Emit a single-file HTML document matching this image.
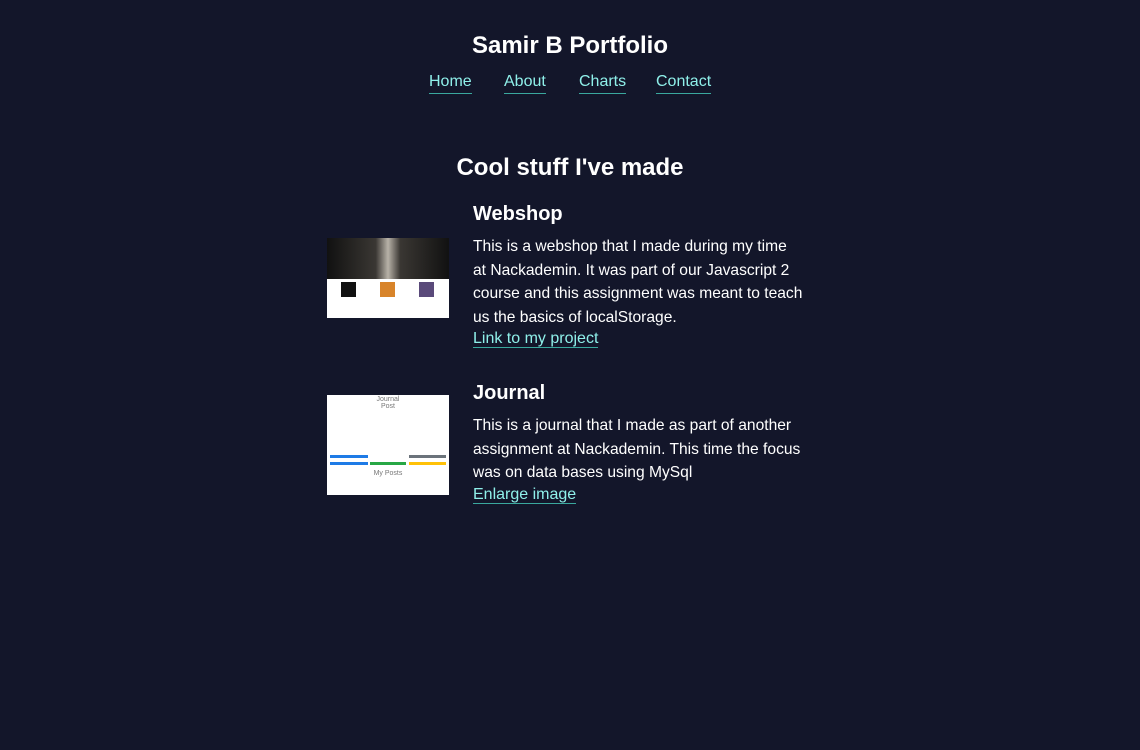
<!DOCTYPE html>
<html><head><meta charset="utf-8"><style>
body{margin:0;background:#13162a;color:#fff;font-family:"Liberation Sans",sans-serif;width:1140px;height:750px;overflow:hidden;position:relative}
.a{position:absolute}
h1,h2,h3{margin:0;font-weight:bold;white-space:nowrap}
a{color:#8ff0ea;text-decoration:none;border-bottom:1px solid #3aa89e}
.nav a{position:absolute;top:72px;font-size:16px;line-height:20px;padding-bottom:1px}
p{margin:0;font-size:15.6px;line-height:23.5px;white-space:nowrap}
</style></head><body>
<h1 class="a" style="left:0;width:1140px;text-align:center;top:32px;font-size:24px">Samir B Portfolio</h1>
<div class="nav">
<a style="left:429px">Home</a><a style="left:504px">About</a><a style="left:579px">Charts</a><a style="left:656px">Contact</a>
</div>
<h2 class="a" style="left:0;width:1140px;text-align:center;top:154px;font-size:24px">Cool stuff I've made</h2>

<div class="a" style="left:327px;top:238px;width:122px;height:80px;background:#fff">
<div style="height:41px;background:linear-gradient(90deg,#111 0%,#3a3733 40%,#b8b2a8 50%,#3a3733 60%,#111 100%)"></div>
<div class="a" style="left:14px;top:44px;width:15px;height:15px;background:#111"></div>
<div class="a" style="left:53px;top:44px;width:15px;height:15px;background:#d8842a"></div>
<div class="a" style="left:92px;top:44px;width:15px;height:15px;background:#5a4a7a"></div>
</div>
<h3 class="a" style="left:473px;top:203px;font-size:20px">Webshop</h3>
<div class="a" style="left:473px;top:235px;width:340px">
<p>This is a webshop that I made during my time<br>at Nackademin. It was part of our Javascript 2<br>course and this assignment was meant to teach<br>us the basics of localStorage.</p>
<a style="font-size:16px;line-height:20px">Link to my project</a>
</div>

<div class="a" style="left:327px;top:395px;width:122px;height:100px;background:#fff;color:#777;font-size:7px;text-align:center">
<div style="padding-top:1px">Journal</div><div>Post</div>
<div class="a" style="left:3px;top:60px;width:38px;height:3px;background:#1e7be6"></div>
<div class="a" style="left:82px;top:60px;width:37px;height:3px;background:#6b737b"></div>
<div class="a" style="left:3px;top:67px;width:38px;height:3px;background:#1e7be6"></div>
<div class="a" style="left:43px;top:67px;width:36px;height:3px;background:#28a745"></div>
<div class="a" style="left:82px;top:67px;width:37px;height:3px;background:#ffc107"></div>
<div class="a" style="left:0;top:75px;width:122px">My Posts</div>
</div>
<h3 class="a" style="left:473px;top:382px;font-size:20px">Journal</h3>
<div class="a" style="left:473px;top:414px;width:340px">
<p>This is a journal that I made as part of another<br>assignment at Nackademin. This time the focus<br>was on data bases using MySql</p>
<a style="font-size:16px;line-height:20px">Enlarge image</a>
</div>
</body></html>
